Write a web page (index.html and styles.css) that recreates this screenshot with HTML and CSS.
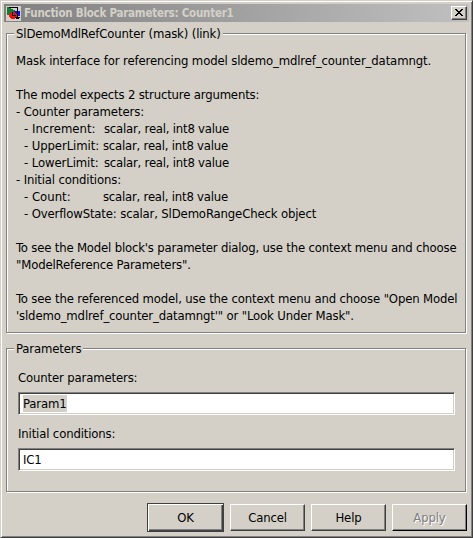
FILE: index.html
```html
<!DOCTYPE html>
<html lang="en">
<head>
<meta charset="utf-8">
<title>Function Block Parameters: Counter1</title>
<link rel="stylesheet" href="styles.css">
</head>
<body>
<main class="window">
  <header class="titlebar">
    <svg class="app-icon" width="15" height="15" viewBox="0 0 15 15" shape-rendering="crispEdges">
      <rect width="15" height="15" fill="#d4d0c8"/>
      <path d="M1 1h2v1h2v1h2v1h2v2H6v2H3v1H1z" fill="#108030"/>
      <path d="M8 5h6v5H8z" fill="#1010e0"/>
      <path d="M5 6h4v1h1v1h1v3h-1v1H9v1H5v-1H4v-1H3V8h1V7h1z" fill="#f01010"/>
      <path d="M3 1h9v10h2v1h-1v1h-3v-1H9v-1h2V2H3zM6 6h1v3h3v1H6z"/>
    </svg>
    <h1 class="title"><span>Function Block Parameters: Counter1</span></h1>
    <button class="close" aria-label="Close"><svg width="8" height="7" viewBox="0 0 8 7" shape-rendering="crispEdges"><path d="M0 0h2v1h1v1h2V1h1V0h2v1H7v1H6v1H5v1h1v1h1v1h1v1H6V6H5V5H3v1H2v1H0V6h1V5h1V4h1V3H2V2H1V1H0z"/></svg></button>
  </header>
  <section class="group description">
    <h2 class="legend"><span class="l0">SlDemoMdlRefCounter (mask) (link)</span></h2>
    <div class="text">
      <p><span class="l1">Mask interface for referencing model sldemo_mdlref_counter_datamngt.</span></p>
      <p class="gap"><span class="l2">The model expects 2 structure arguments:</span></p>
      <p><span class="l3">- Counter parameters:</span></p>
      <p class="item"><span class="name">- Increment:</span><span class="value">scalar, real, int8 value</span></p>
      <p class="item"><span class="name limit">- UpperLimit:</span><span class="value near">scalar, real, int8 value</span></p>
      <p class="item"><span class="name limit">- LowerLimit:</span><span class="value">scalar, real, int8 value</span></p>
      <p><span class="l4">- Initial conditions:</span></p>
      <p class="item"><span class="name">- Count:</span><span class="value near">scalar, real, int8 value</span></p>
      <p class="item"><span class="l5">- OverflowState: scalar, SlDemoRangeCheck object</span></p>
      <p class="gap"><span class="l6">To see the Model block's parameter dialog, use the context menu and choose</span></p>
      <p><span class="l7">"ModelReference Parameters".</span></p>
      <p class="gap"><span class="l8">To see the referenced model, use the context menu and choose "Open Model</span></p>
      <p><span class="l9">'sldemo_mdlref_counter_datamngt'" or "Look Under Mask".</span></p>
    </div>
  </section>
  <section class="group parameters">
    <h2 class="legend"><span class="l10">Parameters</span></h2>
    <div class="label"><span class="l11">Counter parameters:</span></div>
    <div class="field"><span class="selected">Param1</span></div>
    <div class="label second"><span class="l12">Initial conditions:</span></div>
    <div class="field"><span class="ic">IC1</span></div>
  </section>
  <footer class="buttons">
    <button class="button default"><span>OK</span></button>
    <button class="button"><span>Cancel</span></button>
    <button class="button"><span>Help</span></button>
    <button class="button disabled"><span>Apply</span></button>
  </footer>
</main>
</body>
</html>
```
FILE: styles.css
```css
* { box-sizing: border-box; }
body {
  margin: 0;
  background: #d4d0c8;
  color: #000;
  font: 13px/17px "DejaVu Sans", sans-serif;
  font-stretch: condensed;
  letter-spacing: -0.15px;
}
h1, h2, p { margin: 0; font-size: inherit; font-weight: normal; }
.window {
  width: 473px;
  height: 538px;
  padding: 3px;
  border: 1px solid;
  border-color: #d4d0c8 #404040 #404040 #d4d0c8;
  box-shadow: inset 1px 1px #fff, inset -1px -1px #808080;
}
.titlebar {
  display: flex;
  align-items: center;
  height: 18px;
  padding: 0 2px;
  background: linear-gradient(90deg, #808080, #c0c0c0);
}
.title {
  flex: 1;
  padding-left: 3px;
  color: #d4d0c8;
  font-size: 11.5px;
  font-weight: bold;
  letter-spacing: -0.24px;
  white-space: nowrap;
}
.close {
  display: grid;
  place-items: center;
  width: 16px;
  height: 14px;
  padding: 0 1px 1px 0;
  border: 1px solid;
  border-color: #fff #404040 #404040 #fff;
  background: #d4d0c8;
  box-shadow: inset -1px -1px #808080;
}
.group {
  margin: 0 2px;
  width: 460px;
  border: 1px solid #808080;
  box-shadow: 1px 1px #fff, inset 1px 1px #fff;
}
.description { margin-top: 11px; height: 300px; }
.parameters { margin-top: 15px; height: 144px; }
.legend {
  width: max-content;
  margin: -9px 0 0 7px;
  padding: 0 2px;
  background: #d4d0c8;
  white-space: pre;
}
.text { padding: 10px 0 0 9px; white-space: nowrap; }
.text p { height: 17px; }
.text .gap { margin-top: 17px; }
.text .item { display: flex; padding-left: 8px; }
.l1 { letter-spacing: -0.13px; }
.l2 { letter-spacing: -0.17px; }
.l3 { letter-spacing: -0.1px; }
.l6 { letter-spacing: -0.18px; }
.name { width: 80px; letter-spacing: 0; }
.limit { letter-spacing: -0.1px; }
.value { letter-spacing: -0.22px; }
.near { margin-left: -1px; }
.label { padding-left: 11px; margin-top: 12px; }
.label.second { margin-top: 10px; }
.field {
  width: 437px;
  height: 23px;
  margin: 6px 0 0 11px;
  padding: 2px 4px;
  border: 1px solid;
  border-color: #808080 #fff #fff #808080;
  background: #fff;
  box-shadow: inset 1px 1px #404040, inset -1px -1px #d4d0c8;
}
.selected { display: inline-block; height: 17px; width: 44px; background: #d4d0c8; }
.buttons {
  display: flex;
  justify-content: flex-end;
  align-items: center;
  gap: 6px;
  height: 29px;
  margin: 11px 2px 0 0;
}
.button {
  width: 75px;
  height: 27px;
  padding: 0;
  border: 1px solid;
  border-color: #fff #404040 #404040 #fff;
  background: #d4d0c8;
  box-shadow: inset -1px -1px #808080;
  color: #000;
  font: inherit;
  letter-spacing: inherit;
}
.default {
  width: 77px;
  height: 29px;
  border-color: #404040;
  box-shadow: inset 1px 1px #fff, inset -1px -1px #404040, inset -2px -2px #808080;
}
.disabled {
  border-right-color: #000;
  border-bottom-color: #000;
  color: #808080;
  text-shadow: 1px 1px #fff;
}
```
